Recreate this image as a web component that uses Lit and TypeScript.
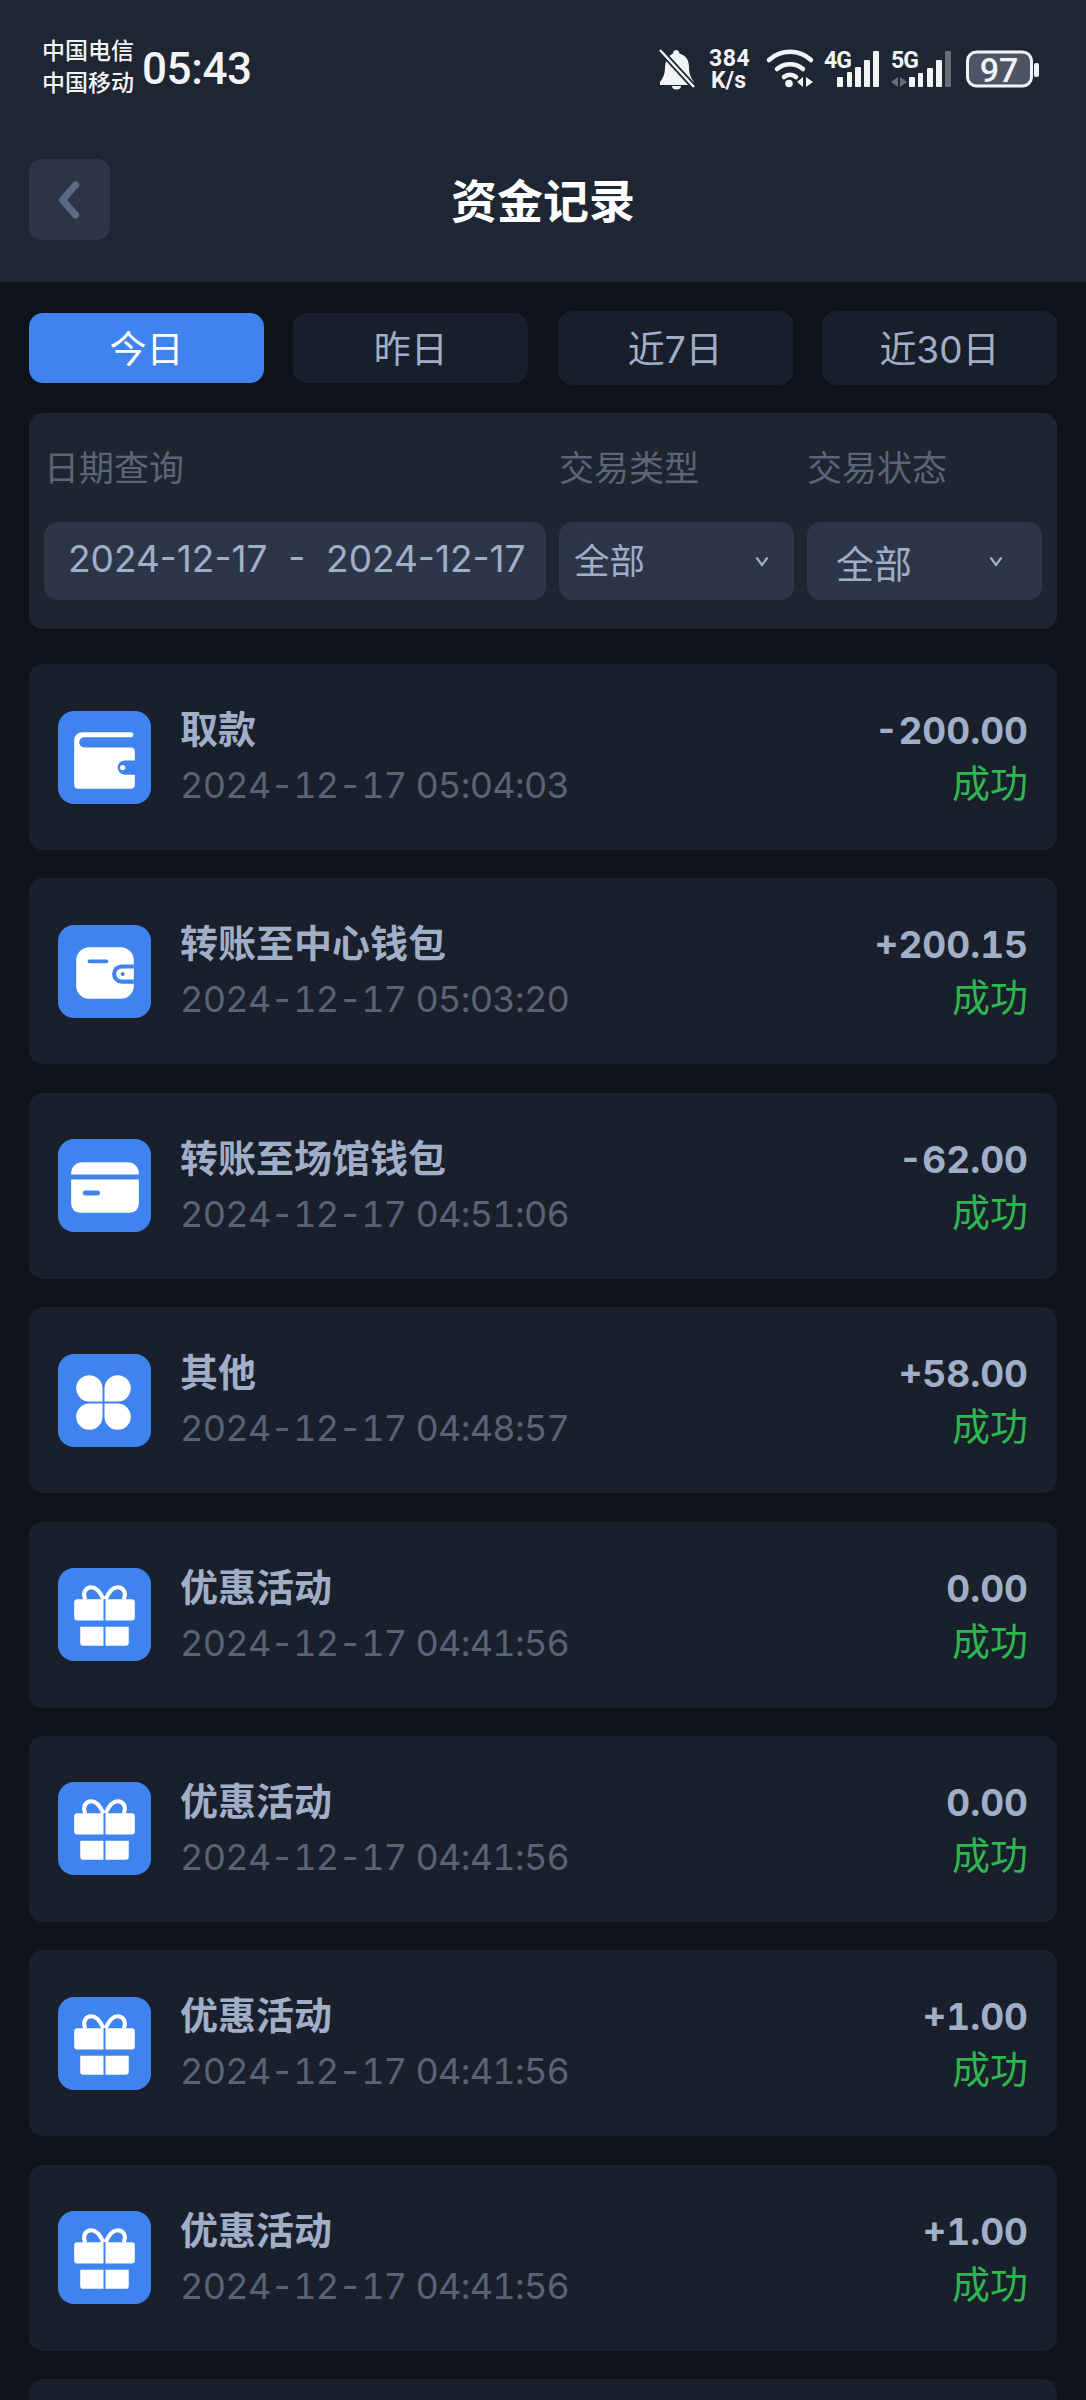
import { LitElement, css, html, svg, unsafeCSS } from 'lit';
import { customElement } from 'lit/decorators.js';

type Kind = 'wallet' | 'purse' | 'card' | 'clover' | 'gift';

interface Rec {
  title: string;
  time: string;
  amount: string;
  kind: Kind;
}

const BLUE = '#3f83ee';

const records: Rec[] = [
  { title: '取款', time: '2024-12-17 05:04:03', amount: '-200.00', kind: 'wallet' },
  { title: '转账至中心钱包', time: '2024-12-17 05:03:20', amount: '+200.15', kind: 'purse' },
  { title: '转账至场馆钱包', time: '2024-12-17 04:51:06', amount: '-62.00', kind: 'card' },
  { title: '其他', time: '2024-12-17 04:48:57', amount: '+58.00', kind: 'clover' },
  { title: '优惠活动', time: '2024-12-17 04:41:56', amount: '0.00', kind: 'gift' },
  { title: '优惠活动', time: '2024-12-17 04:41:56', amount: '0.00', kind: 'gift' },
  { title: '优惠活动', time: '2024-12-17 04:41:56', amount: '+1.00', kind: 'gift' },
  { title: '优惠活动', time: '2024-12-17 04:41:56', amount: '+1.00', kind: 'gift' },
];

const glyphs: Record<Kind, unknown> = {
  wallet: svg`
    <path d="M24 21h48a2.500 2.500 0 0 1 0 5H26a5 5 0 0 0 0 10h46a4 4 0 0 1 4 4v9H66a7 7 0 0 0 0 14h10v10a4 4 0 0 1-4 4H20a4 4 0 0 1-4-4V29a8 8 0 0 1 8-8z" fill="#fff"/>
    <circle cx="64" cy="56" r="2.600" fill="#fff"/>`,
  purse: svg`
    <rect x="18" y="22" width="57" height="51" rx="13" fill="#fff"/>
    <path d="M31 36h17" stroke="${BLUE}" stroke-width="3.600" stroke-linecap="round"/>
    <path d="M75 39H63a9.500 9.500 0 0 0 0 19h12z" fill="${BLUE}"/>
    <path d="M75 43H63a5.500 5.500 0 0 0 0 11h12z" fill="#fff"/>
    <circle cx="64" cy="48.500" r="2" fill="${BLUE}"/>`,
  card: svg`
    <path d="M13 34a11 11 0 0 1 11-11h45a11 11 0 0 1 11 11v1H13z" fill="#fff"/>
    <path d="M13 40h67v24a9 9 0 0 1-9 9H22a9 9 0 0 1-9-9z" fill="#fff"/>
    <path d="M27 53.500h12" stroke="${BLUE}" stroke-width="5" stroke-linecap="round"/>`,
  clover: svg`
    <path d="M44 47H31a13 13 0 1 1 13-13z" fill="#fff"/>
    <path d="M46 47V34a13 13 0 1 1 13 13z" fill="#fff"/>
    <path d="M44 49v13a13 13 0 1 1-13-13z" fill="#fff"/>
    <path d="M46 49h13a13 13 0 1 1-13 13z" fill="#fff"/>`,
  gift: svg`
    <path d="M45 31C41 22 37 19 33 19c-6 0-9 6-6 12M47 31c4-9 8-12 12-12 6 0 9 6 6 12" fill="none" stroke="#fff" stroke-width="4"/>
    <path d="M19 31h26v21H19a3 3 0 0 1-3-3V34a3 3 0 0 1 3-3zM47 31h26a3 3 0 0 1 3 3v15a3 3 0 0 1-3 3H47z" fill="#fff"/>
    <path d="M22 58h23v19H25a3 3 0 0 1-3-3zM47 58h23v16a3 3 0 0 1-3 3H47z" fill="#fff"/>`,
};

const bar = (x: number, w: number, top: number, dim = false) =>
  svg`<rect x="${x}" y="${top}" width="${w}" height="${38 - top}" rx="1" fill="#f3f4f6" opacity="${dim ? 0.35 : 1}"/>`;

@customElement('app-root')
export class AppRoot extends LitElement {
  static styles = css`
    :host {
      display: block;
      width: 1086px;
      height: 2400px;
      overflow: hidden;
      background: #0e121a;
      font-family: Inter, 'Noto Sans CJK SC', sans-serif;
    }
    .top {
      height: 282px;
      background: #1e2533;
      box-sizing: border-box;
      padding: 37px 29px 0;
    }
    .status {
      display: flex;
      align-items: center;
      height: 62px;
      color: #f3f4f6;
      font-family: Roboto, 'Noto Sans CJK SC', sans-serif;
    }
    .carrier {
      font-size: 23px;
      line-height: 32px;
      font-weight: 500;
      width: 101px;
      margin-left: 13px;
      margin-right: -1px;
    }
    .clock {
      font-size: 44px;
      font-weight: 500;
      letter-spacing: -0.4px;
      padding-top: 2px;
    }
    .status-icons {
      margin-left: auto;
      margin-right: 17px;
      padding-top: 2px;
    }
    .status-icons svg {
      display: block;
    }
    .status-icons text {
      font-family: Roboto, sans-serif;
      font-weight: 700;
      fill: #f3f4f6;
    }
    .nav {
      margin-top: 60px;
      position: relative;
      display: flex;
      align-items: center;
      justify-content: center;
      height: 81px;
    }
    .back {
      position: absolute;
      left: 0;
      top: 0;
      width: 81px;
      height: 81px;
      border-radius: 13px;
      background: #2d3647;
      display: flex;
      align-items: center;
      justify-content: center;
    }
    .title {
      font-size: 46px;
      font-weight: 700;
      color: #fff;
      padding-bottom: 4px;
    }
    .main {
      padding: 29px 29px 0;
    }
    .tabs {
      display: grid;
      grid-template-columns: repeat(4, 235px);
      justify-content: space-between;
      align-items: center;
      height: 74px;
    }
    .tab {
      height: 70px;
      box-sizing: border-box;
      padding-bottom: 3px;
      border-radius: 14px;
      background: #191f2a;
      color: #a0aec8;
      font-size: 37px;
      display: flex;
      align-items: center;
      justify-content: center;
    }
    .tab.tall {
      height: 74px;
    }
    .tab.on {
      background: ${unsafeCSS(BLUE)};
      color: #fff;
    }
    .filter {
      margin-top: 28px;
      height: 216px;
      box-sizing: border-box;
      border-radius: 14px;
      background: #1e2430;
      padding: 29px 14px 0 15px;
      display: grid;
      grid-template-columns: 502px 235px 235px;
      column-gap: 13px;
      grid-template-rows: 52px 78px;
      row-gap: 28px;
    }
    .label {
      font-size: 35px;
      color: #5b6578;
      line-height: 52px;
    }
    .field {
      background: #2d3648;
      border-radius: 14px;
      color: #a0aec8;
      font-size: 37px;
      display: flex;
      align-items: center;
    }
    .date {
      padding: 0 0 6px 24px;
      box-sizing: border-box;
      white-space: pre;
    }
    .select {
      justify-content: space-between;
      padding: 0 25px 0 15px;
      font-size: 35.5px;
    }
    .select span {
      margin-bottom: 5px;
    }
    .select.wide {
      padding: 0 39px 0 29px;
      font-size: 38px;
    }
    .select.wide span {
      margin-bottom: 0;
    }
    .list {
      margin-top: 35px;
      display: flex;
      flex-direction: column;
      gap: 28.4px;
    }
    .rec {
      height: 186px;
      flex: none;
      box-sizing: border-box;
      border-radius: 14px;
      background: #191f2b;
      padding: 0 29px;
      display: flex;
      align-items: center;
    }
    .icon {
      width: 93px;
      height: 93px;
      flex: none;
      border-radius: 16px;
      background: ${unsafeCSS(BLUE)};
      margin-right: 29px;
    }
    .icon svg {
      display: block;
    }
    .info,
    .side {
      display: flex;
      flex-direction: column;
      gap: 4px;
      padding-top: 2px;
    }
    .side {
      margin-left: auto;
      align-items: flex-end;
    }
    .name {
      font-size: 38px;
      line-height: 50px;
      font-weight: 700;
      color: #a0aec8;
      margin: -2px 0 2px;
    }
    .amount {
      font-size: 37px;
      line-height: 50px;
      font-weight: 700;
      color: #a0aec8;
      font-variant-numeric: tabular-nums;
    }
    .time {
      font-size: 36px;
      letter-spacing: -0.7px;
      line-height: 50px;
      color: #596377;
      font-variant-numeric: tabular-nums;
    }
    .state {
      font-size: 38px;
      line-height: 50px;
      color: #2cb84e;
      margin: -2px 0 2px;
    }
  `;

  private chevron() {
    return html`<svg width="14" height="11" viewBox="0 0 14 11"><path d="M1.500 1.500l5.500 7.500 5.500-7.500" fill="none" stroke="#a0aec8" stroke-width="2.200"/></svg>`;
  }

  private statusIcons() {
    return html`
      <svg width="385" height="52" viewBox="0 -6 385 52">
        <path d="M21 1a4 4 0 0 1 3.500 3.500c7 2 9.500 7.500 9.500 13.500 0 7 2 11 5 15v3H5v-3c3-4 5-8 5-14 0-7 3-12 8-14.500A3.500 3.500 0 0 1 21 1z" fill="#f3f4f6"/>
        <path d="M17 37h9a4.500 3.500 0 0 1-9 0z" fill="#f3f4f6"/>
        <path d="M5 1l34 37" stroke="#1e2533" stroke-width="6"/>
        <path d="M5 1l34 37" stroke="#f3f4f6" stroke-width="2.500"/>
        <text x="54" y="17" font-size="23" letter-spacing="0.500">384</text>
        <text x="56" y="39" font-size="23">K/s</text>
        <path d="M114 11a31 31 0 0 1 42 0" fill="none" stroke="#f3f4f6" stroke-width="4.500" stroke-linecap="round"/>
        <path d="M122 20a20 20 0 0 1 26 0" fill="none" stroke="#f3f4f6" stroke-width="4.500" stroke-linecap="round"/>
        <path d="M129 28a9 9 0 0 1 12 0" fill="none" stroke="#f3f4f6" stroke-width="4.500" stroke-linecap="round"/>
        <circle cx="134" cy="34.500" r="3.800" fill="#f3f4f6"/>
        <path d="M148 28v10l-6-5zM151 28v10l7-5z" fill="#f3f4f6"/>
        <text x="169" y="19" font-size="23" letter-spacing="-1">4G</text>
        ${bar(182, 6, 28)}${bar(192, 5, 23)}${bar(200, 6, 18)}${bar(209, 6, 11)}${bar(218, 6, 2)}
        <text x="236" y="19" font-size="23" letter-spacing="-1">5G</text>
        <path d="M243 28v10l-7-5zM245 28v10l7-5z" fill="#f3f4f6" opacity="0.35"/>
        ${bar(254, 6, 28)}${bar(263, 5, 24)}${bar(272, 6, 19)}${bar(281, 6, 11)}${bar(290, 6, 2, true)}
        <rect x="312.500" y="3" width="64" height="34" rx="9" fill="#4d5464" stroke="#f3f4f6" stroke-width="3"/>
        <text x="344" y="33" font-size="34" text-anchor="middle" style="font-weight:500">97</text>
        <rect x="379" y="14" width="5" height="14" rx="2" fill="#f3f4f6"/>
      </svg>
    `;
  }

  private record(r: Rec) {
    return html`
      <div class="rec">
        <div class="icon"><svg width="93" height="93" viewBox="0 0 92 92">${glyphs[r.kind]}</svg></div>
        <div class="info">
          <div class="name">${r.title}</div>
          <div class="time">${r.time}</div>
        </div>
        <div class="side">
          <div class="amount">${r.amount}</div>
          <div class="state">成功</div>
        </div>
      </div>
    `;
  }

  render() {
    return html`
      <div class="top">
        <div class="status">
          <div class="carrier">中国电信<br />中国移动</div>
          <div class="clock">05:43</div>
          <div class="status-icons">${this.statusIcons()}</div>
        </div>
        <div class="nav">
          <div class="back">
            <svg width="24" height="40" viewBox="0 0 24 40"><path d="M17.500 5L4.500 20l13 15" fill="none" stroke="#5d6a85" stroke-width="7" stroke-linecap="round" stroke-linejoin="round"/></svg>
          </div>
          <div class="title">资金记录</div>
        </div>
      </div>
      <div class="main">
        <div class="tabs">
          <div class="tab on">今日</div>
          <div class="tab">昨日</div>
          <div class="tab tall">近7日</div>
          <div class="tab tall">近30日</div>
        </div>
        <div class="filter">
          <div class="label">日期查询</div>
          <div class="label">交易类型</div>
          <div class="label">交易状态</div>
          <div class="field date">2024-12-17  -  2024-12-17</div>
          <div class="field select"><span>全部</span>${this.chevron()}</div>
          <div class="field select wide"><span>全部</span>${this.chevron()}</div>
        </div>
        <div class="list">
          ${records.map((r) => this.record(r))}
          <div class="rec"></div>
        </div>
      </div>
    `;
  }
}
